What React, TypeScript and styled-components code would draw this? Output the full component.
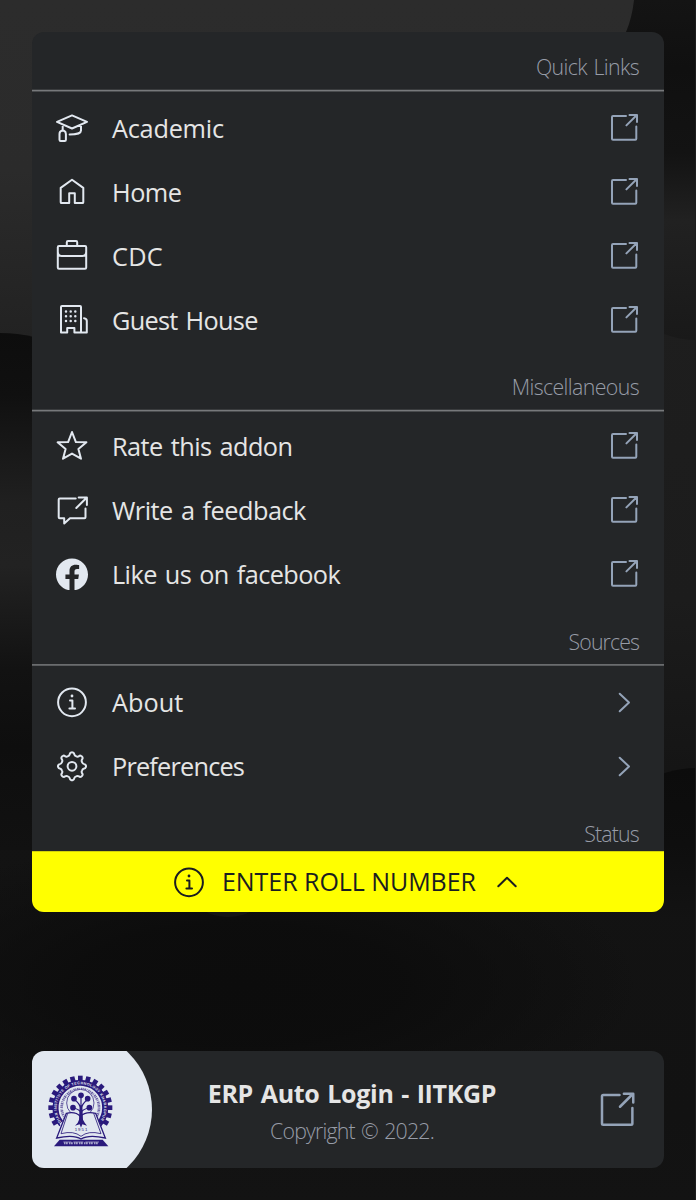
import React from "react";
import styled, { createGlobalStyle } from "styled-components";

const GlobalStyle = createGlobalStyle`
  * { box-sizing: border-box; }
  body {
    margin: 0;
    background: #111111;
    font-family: "Segoe UI", "Open Sans", "Noto Sans", sans-serif;
    color: #e5e5e5;
  }
`;

const Page = styled.main`
  position: relative;
  width: 696px;
  height: 1200px;
  padding: 32px;
  overflow: hidden;
  display: flex;
  flex-direction: column;
  justify-content: space-between;
`;

const Backdrop = styled.svg`
  position: absolute;
  inset: 0;
  width: 696px;
  height: 1200px;
`;

const Card = styled.section`
  position: relative;
  display: flex;
  flex-direction: column;
  height: 880px;
  border-radius: 12px;
  overflow: hidden;
  background: #242628;
`;

const Heading = styled.h2<{ $height?: number; $gap?: number; $rule?: string; $tracking?: number; $top?: number }>`
  margin: 0 0 ${(p) => p.$gap ?? 4}px;
  height: ${(p) => p.$height ?? 60}px;
  padding: ${(p) => p.$top ?? 18}px 25px 0 24px;
  flex: none;
  text-align: right;
  font-size: 21.3px;
  line-height: 34px;
  font-weight: 300;
  letter-spacing: ${(p) => p.$tracking ?? 0}px;
  word-spacing: 1.5px;
  color: #979ca7;
  background: ${(p) => p.$rule ?? "none"};
`;

const Row = styled.a`
  display: flex;
  align-items: center;
  height: 64px;
  flex: none;
  padding: 0 24px;
  color: #e2e8f0;
`;

const Label = styled.span<{ $tracking: number }>`
  flex: 1;
  margin-left: 24px;
  font-size: 25.3px;
  line-height: 36px;
  font-weight: 430;
  letter-spacing: ${(p) => p.$tracking}px;
  word-spacing: 2px;
  color: #e5e5e5;
  white-space: nowrap;
`;

const Icon = styled.svg<{ $size?: number }>`
  width: ${(p) => p.$size ?? 32}px;
  height: ${(p) => p.$size ?? 32}px;
  flex: none;
  display: block;
  fill: none;
  stroke: currentColor;
  stroke-width: 2;
  stroke-linecap: round;
  stroke-linejoin: round;
`;

const Trailing = styled.span`
  color: #94a3b8;
`;

const StatusBar = styled.button`
  display: flex;
  align-items: center;
  height: 61px;
  padding: 0 0 0 141px;
  border: 0;
  border-top: 1px solid #d2d20b;
  background: #ffff00;
  color: #1a1d20;
  font: inherit;
`;

const StatusText = styled.span`
  width: 252px;
  margin: -2px 17px 0;
  font-size: 25px;
  line-height: 36px;
  font-weight: 370;
  letter-spacing: -0.05px;
  text-align: left;
  white-space: nowrap;
  color: #1a1d20;
`;

const Footer = styled.footer`
  position: relative;
  display: flex;
  align-items: center;
  height: 117px;
  padding-right: 27px;
  border-radius: 12px;
  overflow: hidden;
  background: #242628;
`;

const Emblem = styled.div`
  width: 120px;
  height: 117px;
  flex: none;
  padding: 23px 0 0 15px;
  background: #e2e8f0;
  clip-path: circle(80px at 40px 58.5px);
`;

const Credits = styled.div`
  flex: 1;
  padding: 4px 45px 0 0;
  text-align: center;
  white-space: nowrap;
`;

const Title = styled.div`
  font-size: 25px;
  line-height: 38px;
  font-weight: 690;
  letter-spacing: -0.3px;
  word-spacing: 1.5px;
`;

const Copyright = styled.div`
  font-size: 21.3px;
  line-height: 38px;
  font-weight: 300;
  letter-spacing: -0.8px;
  word-spacing: 1.5px;
  color: #979ca7;
`;

const ExternalIcon = ({ size }: { size?: number }) => (
  <Icon $size={size} viewBox="0 0 32 32">
    <path d="M18 4H5Q4 4 4 5V26.7Q4 27.7 5 27.7H27.3Q28.3 27.7 28.3 26.7V14.4M21.5 2.9H29V10M18.4 13.4 28.6 3.2" />
  </Icon>
);

const ChevronIcon = () => (
  <Icon viewBox="0 0 32 32">
    <path d="M11.7 7.7 21 16.5 11.7 25.2" />
  </Icon>
);

const InfoIcon = () => (
  <Icon viewBox="0 0 32 32">
    <circle cx="16" cy="16.3" r="13.9" />
    <path d="M14 14.4H16.4V22.4M13.4 22.4H19" />
    <circle cx="16" cy="10" r="1.4" fill="currentColor" stroke="none" />
  </Icon>
);

const gearOutline = () => {
  const at = (r: number, deg: number) => {
    const a = (deg * Math.PI) / 180;
    return `${(16 + r * Math.sin(a)).toFixed(2)} ${(16.3 - r * Math.cos(a)).toFixed(2)}`;
  };
  let d = `M${at(13.8, -4)}`;
  for (let k = 0; k < 8; k++) {
    const t = k * 45;
    d += `Q${at(14.3, t)} ${at(13.8, t + 4)}Q${at(13.6, t + 9)} ${at(12.4, t + 10)}`;
    d += `Q${at(10.7, t + 14)} ${at(10.9, t + 22.5)}Q${at(10.7, t + 31)} ${at(12.4, t + 35)}`;
    d += `Q${at(13.6, t + 36)} ${at(13.8, t + 41)}`;
  }
  return d + "Z";
};

const icons: Record<string, React.ReactNode> = {
  academic: (
    <Icon viewBox="0 0 32 32">
      <path d="M16 3.4 31 9.9 16 16.5 1 9.9ZM6.7 12.7V18.6M25 12.7V18.4C25 21 20 22.6 13.6 22.6M5.6 18.8H7.9Q9.9 19.6 9.9 22V27.8Q9.9 29 8.7 29H4.7Q3.5 29 3.5 27.8V22Q3.5 19.6 5.6 18.8Z" />
    </Icon>
  ),
  home: (
    <Icon viewBox="0 0 32 32">
      <path d="M16 3.8 4.7 11.9V26.2Q4.7 27.1 5.6 27.1H13.2V17.2H18.8V27.1H26.4Q27.3 27.1 27.3 26.2V11.9Z" />
    </Icon>
  ),
  briefcase: (
    <Icon viewBox="0 0 32 32">
      <path d="M3 6H29Q30.2 6 30.2 7.2V27.6Q30.2 28.8 29 28.8H3Q1.8 28.8 1.8 27.6V7.2Q1.8 6 3 6ZM10.8 6V2.2Q10.8 1 12 1H20Q21.2 1 21.2 2.2V6M1.8 11.8Q2 16 5.6 16H26.4Q30 16 30.2 11.8" />
    </Icon>
  ),
  building: (
    <Icon viewBox="0 0 32 32">
      <path d="M5 3Q5 2 6 2H24Q25 2 25 3V28.6H18.4V24H11.2V28.6H5ZM25 28.6H30.8V17Q30.8 14.5 28 14.2" />
      <path
        d="M10 7.5h.01M14.7 7.5h.01M19.3 7.5h.01M10 12.3h.01M14.7 12.3h.01M19.3 12.3h.01M10 17h.01M14.7 17h.01M19.3 17h.01"
        strokeWidth="2.5"
      />
    </Icon>
  ),
  star: (
    <Icon viewBox="0 0 32 32">
      <path d="M16 2 19.9 12.1 30.4 12.3 22.4 18.9 25 28.7 16 23.6 7 28.7 9.6 18.9 1.6 12.3 12.1 12.1Z" />
    </Icon>
  ),
  feedback: (
    <Icon viewBox="0 0 32 32">
      <path d="M19.7 4.4H3.7Q2.7 4.4 2.7 5.4V23.2Q2.7 24.2 3.7 24.2H8.2V29.6L14 24.2H28.5Q29.5 24.2 29.5 23.2V14.4M22.7 3.4H30.9V11M20.3 14 30.6 3.7" />
    </Icon>
  ),
  facebook: (
    <Icon viewBox="0 -0.3 24 24">
      <path
        fill="currentColor"
        stroke="none"
        d="M24 12.073c0-6.627-5.373-12-12-12s-12 5.373-12 12c0 5.99 4.388 10.954 10.125 11.854v-8.385H7.078v-3.47h3.047V9.43c0-3.007 1.792-4.669 4.533-4.669 1.312 0 2.686.235 2.686.235v2.953H15.83c-1.491 0-1.956.925-1.956 1.874v2.25h3.328l-.532 3.47h-2.796v8.385C19.612 23.027 24 18.062 24 12.073z"
      />
    </Icon>
  ),
  info: <InfoIcon />,
  gear: (
    <Icon viewBox="0 0 32 32">
      <path d={gearOutline()} />
      <circle cx="16" cy="16.3" r="4.4" />
    </Icon>
  ),
};

interface LinkProps {
  icon: string;
  label: string;
  tracking?: number;
  internal?: boolean;
}

const LinkRow = ({ icon, label, tracking = 0, internal }: LinkProps) => (
  <Row>
    {icons[icon]}
    <Label $tracking={tracking}>{label}</Label>
    <Trailing>{internal ? <ChevronIcon /> : <ExternalIcon />}</Trailing>
  </Row>
);

const teeth = Array.from({ length: 24 }, (_, i) => i * 15).filter((a) => a < 135 || a > 225);

const InstituteLogo = () => (
  <svg width="67" height="73.7" viewBox="50 85 201 221">
    <g fill="#2a1a7c">
      {teeth.map((a) => (
        <rect key={a} x="143" y="90" width="14" height="18" transform={`rotate(${a} 150 186)`} />
      ))}
    </g>
    <path d="M89 240A81 81 0 1 1 211 240" fill="none" stroke="#2a1a7c" strokeWidth="5" />
    <circle cx="150" cy="186" r="74" fill="none" stroke="#2a1a7c" strokeWidth="17" strokeDasharray="330 135" transform="rotate(142 150 186)" />
    <path id="ring" d="M101 238A71 71 0 1 1 199 238" fill="none" />
    <text fontFamily="Liberation Sans" fontWeight="700" fontSize="11" fill="#e2e8f0">
      <textPath href="#ring" textLength="318">INDIAN INSTITUTE OF TECHNOLOGY KHARAGPUR</textPath>
    </text>
    <circle cx="150" cy="186" r="56" fill="none" stroke="#6d63a6" strokeWidth="8" strokeDasharray="3 2 5 2 2 3 4 1.5" pathLength="352" />
    <circle cx="150" cy="172" r="41" fill="#e2e8f0" stroke="#2a1a7c" strokeWidth="2.2" />
    <g fill="none" stroke="#2a1a7c" strokeWidth="3.5">
      <path d="M152 205V152M152 192Q150 174 130 160M152 192Q154 174 174 160M152 200Q146 190 128 187M152 200Q158 190 176 187" />
    </g>
    <g fill="#2a1a7c">
      <circle cx="152" cy="149" r="8.5" />
      <circle cx="131" cy="159" r="8.5" />
      <circle cx="172" cy="159" r="8.5" />
      <circle cx="128" cy="186" r="8.5" />
      <circle cx="177" cy="186" r="8.5" />
    </g>
    <path d="M108 203Q135 196 150 212Q166 196 196 203L225 277Q175 266 152 280Q130 266 79 277Z" fill="#e2e8f0" stroke="#2a1a7c" strokeWidth="4" />
    <path d="M112 203 92 264Q130 254 152 272Q174 254 212 264L190 203" fill="none" stroke="#2a1a7c" strokeWidth="2.5" />
    <path d="M148 180H156L158 222Q164 234 170 240L156 236 152 246 148 236 134 240Q144 232 146 222Z" fill="#2a1a7c" />
    <text x="152" y="257" textAnchor="middle" fontFamily="Liberation Sans" fontSize="13" fill="#2a1a7c" textLength="38">1951</text>
    <path d="M88 282H217L234 302H71Z" fill="#2a1a7c" />
    <g fill="none" stroke="#e2e8f0">
      <path d="M99 289H123M129 289H159M165 289H206" strokeWidth="1.6" />
      <path d="M101 293H206" strokeWidth="6" strokeDasharray="2 3 3 2 1.5 3.5" />
    </g>
  </svg>
);

const BackgroundArt = () => (
  <Backdrop viewBox="0 0 696 1200" preserveAspectRatio="none">
    <defs>
      <linearGradient id="base" x1="0" y1="0" x2="0" y2="1">
        <stop offset="0" stopColor="#202020" />
        <stop offset="0.5" stopColor="#1c1c1c" />
        <stop offset="0.68" stopColor="#131313" />
        <stop offset="0.93" stopColor="#121212" />
        <stop offset="1" stopColor="#131313" />
      </linearGradient>
      <linearGradient id="top" x1="0" y1="0" x2="0" y2="1">
        <stop offset="0" stopColor="#2c2c2c" />
        <stop offset="0.5" stopColor="#2b2b2b" />
        <stop offset="1" stopColor="#222222" />
      </linearGradient>
      <linearGradient id="right" x1="0" y1="0" x2="0" y2="1">
        <stop offset="0" stopColor="#141414" />
        <stop offset="0.2" stopColor="#101010" />
        <stop offset="0.45" stopColor="#131313" />
        <stop offset="0.65" stopColor="#212121" />
        <stop offset="1" stopColor="#191919" />
      </linearGradient>
      <linearGradient id="left" x1="0" y1="0" x2="0" y2="1">
        <stop offset="0" stopColor="#0d0d0d" />
        <stop offset="0.12" stopColor="#101010" />
        <stop offset="0.33" stopColor="#202020" />
        <stop offset="0.45" stopColor="#222222" />
        <stop offset="0.65" stopColor="#121212" />
        <stop offset="0.8" stopColor="#0e0e0e" />
        <stop offset="1" stopColor="#111111" />
      </linearGradient>
      <radialGradient id="pool">
        <stop offset="0" stopColor="#0c0c0c" />
        <stop offset="0.4" stopColor="#0c0c0c" stopOpacity="0.9" />
        <stop offset="1" stopColor="#0c0c0c" stopOpacity="0" />
      </radialGradient>
      <linearGradient id="corner" x1="0" y1="0" x2="0" y2="1">
        <stop offset="0" stopColor="#0c0c0c" />
        <stop offset="0.5" stopColor="#0e0e0e" />
        <stop offset="1" stopColor="#131313" />
      </linearGradient>
    </defs>
    <rect width="696" height="1200" fill="url(#base)" />
    <path d="M600 0H696V340Q680 340 664 334L600 300Z" fill="url(#right)" />
    <path d="M0 0H634Q632 18 626 32L500 340H0Z" fill="url(#top)" />
    <path d="M0 333Q18 333 34 337L200 420V850H0Z" fill="url(#left)" />
    <path d="M640 784Q668 768 696 768V920H640Z" fill="url(#corner)" />
    <ellipse cx="240" cy="985" rx="400" ry="150" fill="url(#pool)" />
    <circle cx="228" cy="867" r="50" fill="#151515" />
    <path d="M695.5 0V1200" stroke="#1d1d1d" />
  </Backdrop>
);

const centeredRule =
  "linear-gradient(#3a3c3e 0 1px,#77797b 1px 2px,#4a4c4e 2px 3px) 0 100%/100% 3px no-repeat";
const solidRule = "linear-gradient(#6a6c6e 0 1px,#5a5c5e 1px 2px) 0 100%/100% 2px no-repeat";

export default function App() {
  return (
    <>
      <GlobalStyle />
      <Page>
        <BackgroundArt />
        <Card>
          <Heading $rule={centeredRule} $tracking={-0.6}>Quick Links</Heading>
          <LinkRow icon="academic" label="Academic" tracking={-0.25} />
          <LinkRow icon="home" label="Home" tracking={-0.5} />
          <LinkRow icon="briefcase" label="CDC" tracking={0.2} />
          <LinkRow icon="building" label="Guest House" tracking={-0.7} />
          <Heading $rule={centeredRule} $gap={2} $tracking={-0.6}>Miscellaneous</Heading>
          <LinkRow icon="star" label="Rate this addon" tracking={-0.55} />
          <LinkRow icon="feedback" label="Write a feedback" tracking={-0.5} />
          <LinkRow icon="facebook" label="Like us on facebook" tracking={-0.58} />
          <Heading $rule={solidRule} $top={19} $tracking={-0.9}>Sources</Heading>
          <LinkRow icon="info" label="About" tracking={0} internal />
          <LinkRow icon="gear" label="Preferences" tracking={-0.8} internal />
          <Heading $height={53} $gap={0} $top={19} $tracking={-0.8}>Status</Heading>
          <StatusBar>
            <InfoIcon />
            <StatusText>ENTER ROLL NUMBER</StatusText>
            <Icon viewBox="0 0 32 32">
              <path d="M7.3 20.2 16 11.7 24.7 20.2" />
            </Icon>
          </StatusBar>
        </Card>
        <Footer>
          <Emblem>
            <InstituteLogo />
          </Emblem>
          <Credits>
            <Title>ERP Auto Login - IITKGP</Title>
            <Copyright>Copyright © 2022.</Copyright>
          </Credits>
          <Trailing>
            <ExternalIcon size={40} />
          </Trailing>
        </Footer>
      </Page>
    </>
  );
}
